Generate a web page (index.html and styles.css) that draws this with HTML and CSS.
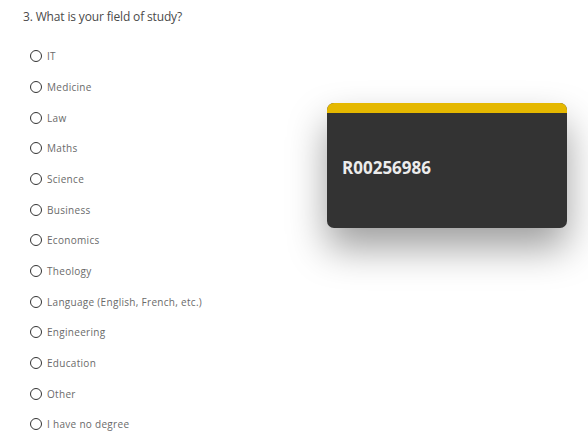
FILE: index.html
```html
<!DOCTYPE html>
<html>
<head>
<meta charset="utf-8">
<link rel="stylesheet" href="styles.css">
</head>
<body>
<div class="page">
  <div class="question">
    <h2 class="q-title">3. What is your field of study?</h2>
    <ul class="options">
      <li class="option"><span class="radio"></span><span class="label">IT</span></li>
      <li class="option"><span class="radio"></span><span class="label">Medicine</span></li>
      <li class="option"><span class="radio"></span><span class="label">Law</span></li>
      <li class="option"><span class="radio"></span><span class="label">Maths</span></li>
      <li class="option"><span class="radio"></span><span class="label">Science</span></li>
      <li class="option"><span class="radio"></span><span class="label">Business</span></li>
      <li class="option"><span class="radio"></span><span class="label">Economics</span></li>
      <li class="option"><span class="radio"></span><span class="label">Theology</span></li>
      <li class="option"><span class="radio"></span><span class="label">Language (English, French, etc.)</span></li>
      <li class="option"><span class="radio"></span><span class="label">Engineering</span></li>
      <li class="option"><span class="radio"></span><span class="label">Education</span></li>
      <li class="option"><span class="radio"></span><span class="label">Other</span></li>
      <li class="option"><span class="radio"></span><span class="label">I have no degree</span></li>
    </ul>
  </div>
  <div class="card">
    <div class="card-bar"></div>
    <div class="card-body">R00256986</div>
  </div>
</div>
</body>
</html>
```

FILE: styles.css
```css
html, body {
  margin: 0;
  padding: 0;
  background: #ffffff;
}
.page {
  position: relative;
  width: 588px;
  height: 446px;
  overflow: hidden;
  font-family: "Open Sans", "Liberation Sans", sans-serif;
}
.question {
  padding: 8px 0 0 23px;
}
.q-title {
  margin: 0;
  font-size: 12px;
  font-weight: 400;
  color: #4a4a4a;
  line-height: 18px;
  letter-spacing: -0.15px;
}
.options {
  list-style: none;
  margin: 15px 0 0 0;
  padding: 0 0 0 7px;
}
.option {
  display: flex;
  align-items: center;
  height: 30.67px;
}
.radio {
  width: 10px;
  height: 10px;
  border: 1.5px solid #333333;
  border-radius: 50%;
  flex: none;
}
.label {
  margin-left: 5px;
  font-size: 10px;
  color: #6a6a6a;
  letter-spacing: 0.3px;
}
.card {
  position: absolute;
  left: 327px;
  top: 103px;
  width: 240px;
  height: 125px;
  border-radius: 7px;
  overflow: hidden;
  background: #333333;
  box-shadow: 0 20px 38px rgba(0, 0, 0, 0.38);
}
.card-bar {
  height: 10px;
  background: #e5b800;
}
.card-body {
  padding: 45px 0 0 15px;
  font-family: "Open Sans", sans-serif;
  font-weight: 700;
  font-size: 17px;
  color: #ececec;
  line-height: 20px;
}
```
